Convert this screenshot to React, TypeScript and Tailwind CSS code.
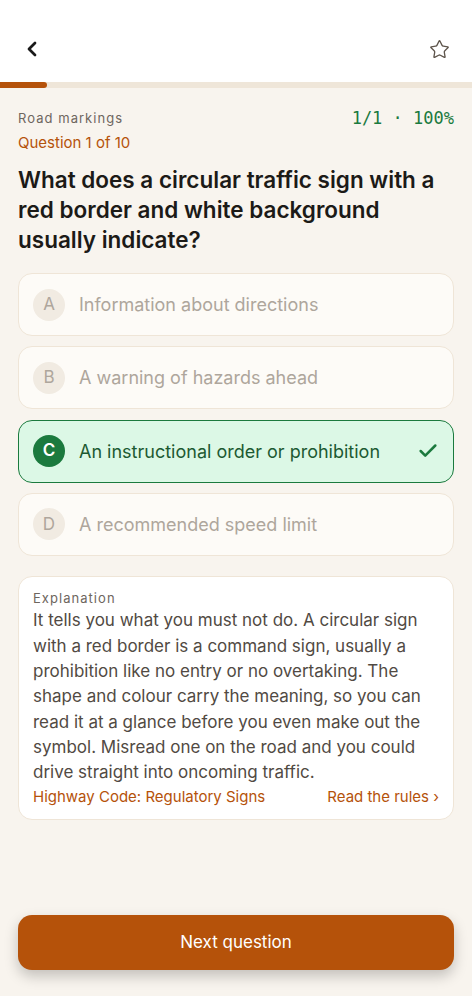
import { ChevronLeft, Star, Check } from "lucide-react";

const options = [
  { key: "A", text: "Information about directions", correct: false },
  { key: "B", text: "A warning of hazards ahead", correct: false },
  { key: "C", text: "An instructional order or prohibition", correct: true },
  { key: "D", text: "A recommended speed limit", correct: false },
];

function Option({ letter, text, correct }: { letter: string; text: string; correct: boolean }) {
  if (correct) {
    return (
      <div className="flex h-[63px] items-center gap-[14px] rounded-[14px] border-[1.5px] border-[#1b7a3e] bg-[#dcf8e6] px-[14px]">
        <span className="flex h-[32px] w-[32px] shrink-0 items-center justify-center rounded-full bg-[#1b7a3e] text-[17px] font-semibold text-white">
          {letter}
        </span>
        <span className="flex-1 text-[18px] text-[#1c5a32]">{text}</span>
        <Check size={22} strokeWidth={2.75} className="text-[#1b7a3e]" />
      </div>
    );
  }
  return (
    <div className="flex h-[63px] items-center gap-[14px] rounded-[14px] border border-[#efe5d7] bg-[#fdfbf7] px-[14px]">
      <span className="flex h-[32px] w-[32px] shrink-0 items-center justify-center rounded-full bg-[#f1ebe2] text-[17px] text-[#aea69c]">
        {letter}
      </span>
      <span className="flex-1 text-[18px] text-[#aea69c]">{text}</span>
    </div>
  );
}

export default function App() {
  return (
    <div className="flex h-[996px] w-[472px] flex-col bg-[#f8f4ee] font-['Inter',sans-serif]">
      {/* top bar */}
      <div className="flex h-[82px] items-center justify-between bg-white pl-[20px] pr-[22px] pt-[16px]">
        <ChevronLeft size={24} strokeWidth={2.75} className="text-[#1a1a1a]" />
        <Star size={21} strokeWidth={1.5} className="text-[#5e554c]" />
      </div>
      <div className="h-[6px] w-full bg-[#efe6d9]">
        <div className="h-full w-[47px] rounded-r-full bg-[#b5520a]" />
      </div>

      <div className="flex flex-1 flex-col px-[18px]">
        <div className="mt-[18px] flex items-center justify-between">
          <span className="text-[13px] tracking-[0.08em] text-[#6e665e]">Road markings</span>
          <span className="font-['DejaVu_Sans_Mono',monospace] text-[17px] text-[#1b7a3e]">1/1 · 100%</span>
        </div>
        <div className="mt-0 text-[15px] text-[#b5520a]">Question 1 of 10</div>

        <h1 className="mt-[11px] text-[22.5px] font-semibold leading-[30px] text-[#1c1a17]">
          What does a circular traffic sign with a red border and white background usually indicate?
        </h1>

        <div className="mt-[18px] flex flex-col gap-[10.3px]">
          {options.map((o) => (
            <Option key={o.key} letter={o.key} text={o.text} correct={o.correct} />
          ))}
        </div>

        <div className="mt-[20px] rounded-[14px] border border-[#efe5d7] bg-white px-[14px] pb-[10px] pt-[12px]">
          <div className="text-[13px] tracking-[0.08em] text-[#6e665e]">Explanation</div>
          <p className="text-[17px] leading-[25.3px] text-[#514a43]">
            It tells you what you must not do. A circular sign with a red border is a command sign, usually a
            prohibition like no entry or no overtaking. The shape and colour carry the meaning, so you can read it
            at a glance before you even make out the symbol. Misread one on the road and you could drive straight
            into oncoming traffic.
          </p>
          <div className="flex items-center justify-between text-[15px] leading-[24px] text-[#b5520a]">
            <span>Highway Code: Regulatory Signs</span>
            <span>Read the rules ›</span>
          </div>
        </div>

        <div className="flex-1" />

        <button className="mb-[26px] flex h-[55px] w-full items-center justify-center rounded-[14px] bg-[#b5520a] text-[17px] text-white shadow-[0_6px_14px_rgba(0,0,0,0.22)]">
          Next question
        </button>
      </div>
    </div>
  );
}
